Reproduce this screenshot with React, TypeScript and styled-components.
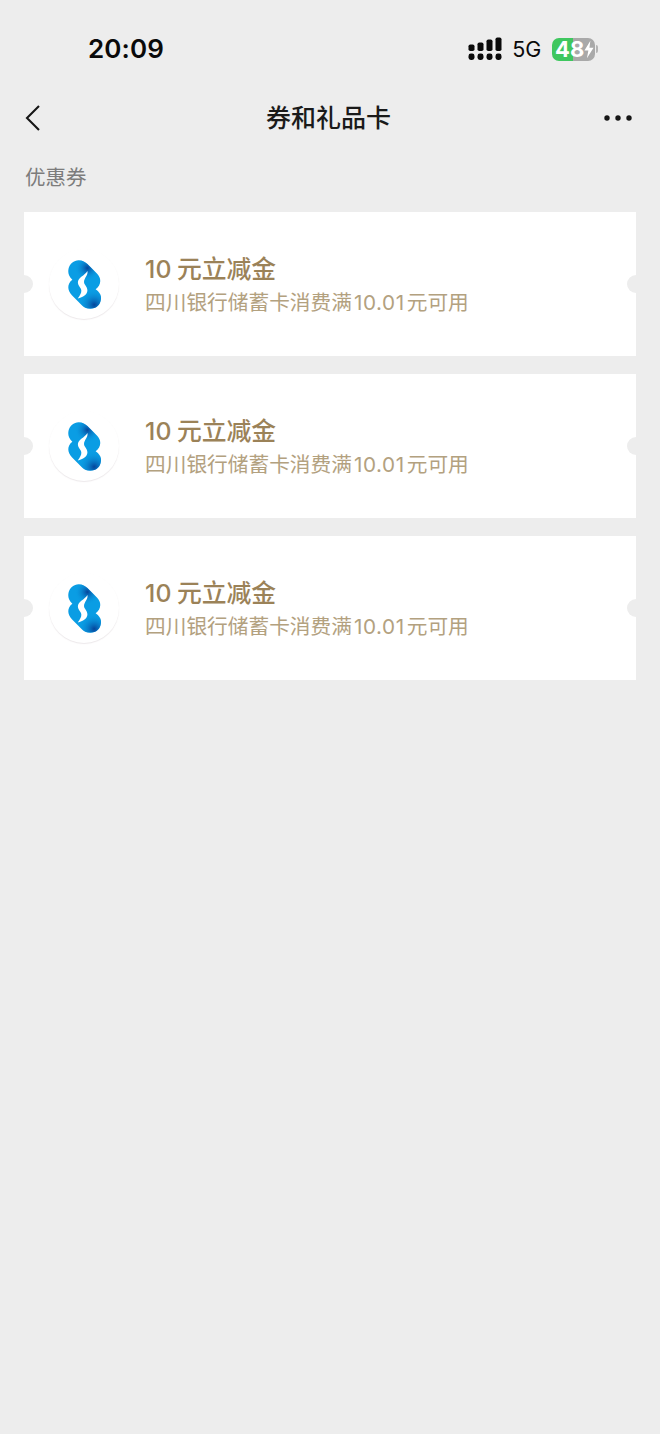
import React from "react";
import styled, { createGlobalStyle } from "styled-components";

const Global = createGlobalStyle`
  html, body { margin: 0; padding: 0; background: #ededed; }
  body { font-family: "Inter", "Noto Sans CJK SC", sans-serif; }
`;

const Page = styled.div`
  width: 660px;
  height: 1434px;
  background: #ededed;
  overflow: hidden;
  display: flex;
  flex-direction: column;
`;

const StatusBar = styled.div`
  height: 98px;
  padding: 0 62px 0 88px;
  box-sizing: border-box;
  display: flex;
  align-items: center;
  justify-content: space-between;
`;

const Time = styled.div`
  font-family: "Inter", sans-serif;
  font-size: 26px;
  font-weight: 600;
  letter-spacing: 0.1px;
  color: #0a0a0a;
  padding-bottom: 2px;
`;

const StatusRight = styled.div`
  display: flex;
  align-items: center;
`;

const Network = styled.span`
  font-family: "Inter", sans-serif;
  font-size: 21.5px;
  font-weight: 400;
  color: #0a0a0a;
  margin: 0 11px 0 10px;
  letter-spacing: -0.2px;
`;

const Battery = styled.div`
  width: 43px;
  height: 23px;
  border-radius: 7px;
  overflow: hidden;
  background: linear-gradient(to right, #3fc75f 0 21px, #a9a9a9 21px);
  display: flex;
  align-items: center;
  padding-left: 3px;
  box-sizing: border-box;
  font-family: "Inter", sans-serif;
  font-size: 22px;
  font-weight: 700;
  color: #fff;
`;

const BatteryNub = styled.div`
  width: 2px;
  height: 8px;
  margin-left: 1px;
  border-radius: 0 2px 2px 0;
  background: #b4b4b4;
`;

const Nav = styled.div`
  height: 40px;
  padding: 0 28px 0 25px;
  display: grid;
  grid-template-columns: 1fr auto 1fr;
  align-items: center;
`;

const NavEnd = styled.div`
  display: flex;
  justify-content: flex-end;
`;

const NavStart = styled.div`
  display: flex;
`;

const NavTitle = styled.div`
  font-size: 25px;
  font-weight: 500;
  color: #1a1a1a;
  padding-bottom: 4px;
`;

const SectionLabel = styled.div`
  margin: 26px 0 0 25px;
  height: 28px;
  line-height: 28px;
  font-size: 20.5px;
  color: #7c7c7c;
`;

const List = styled.div`
  margin: 20px 24px 0;
  display: flex;
  flex-direction: column;
  gap: 18px;
`;

const Card = styled.div`
  position: relative;
  height: 144px;
  background: #fff;
  overflow: hidden;
  display: flex;
  align-items: center;
  padding-left: 25px;
  gap: 26px;
`;

const Notch = styled.span<{ $side: "left" | "right" }>`
  position: absolute;
  top: 63px;
  ${(p) => p.$side}: -9px;
  width: 18px;
  height: 18px;
  border-radius: 50%;
  background: #ededed;
`;

const LogoCircle = styled.div`
  width: 70px;
  height: 70px;
  border-radius: 50%;
  background: #fff;
  box-shadow: 0 1px 1px rgba(150, 130, 140, 0.18);
  display: flex;
  align-items: center;
  justify-content: center;
  flex-shrink: 0;
`;

const CardText = styled.div`
  display: flex;
  flex-direction: column;
  gap: 4px;
  margin-top: 2px;
`;

const CardTitle = styled.div`
  font-size: 24.8px;
  line-height: 32px;
  font-weight: 500;
  color: #9b8258;
  white-space: nowrap;
`;

const TitleAmount = styled.span`
  margin-right: 5px;
  letter-spacing: 0.3px;
`;

const CardDesc = styled.div`
  font-size: 20.7px;
  line-height: 28px;
  color: #b3a17f;
  white-space: nowrap;
`;

const DescAmount = styled.span`
  margin: 0 2px;
  letter-spacing: 0.6px;
`;

const Signal = () => (
  <svg width="34" height="24" viewBox="0 0 34 24" fill="#0a0a0a">
    <rect x="0.5" y="7.5" width="6" height="6.5" rx="1.8" />
    <rect x="9.5" y="5.5" width="6" height="8.5" rx="1.8" />
    <rect x="18.5" y="2.5" width="6" height="11.5" rx="1.8" />
    <rect x="27.5" y="0.5" width="6" height="13.5" rx="1.8" />
    <rect x="0.5" y="16.5" width="6" height="6.5" rx="2.4" />
    <rect x="9.5" y="16.5" width="6" height="6.5" rx="2.4" />
    <rect x="18.5" y="16.5" width="6" height="6.5" rx="2.4" />
    <rect x="27.5" y="16.5" width="6" height="6.5" rx="2.4" />
  </svg>
);

const Bolt = () => (
  <svg width="10" height="19" viewBox="0 0 11 19" fill="#fff">
    <path d="M7 0 L0.5 10.5 H4.8 L3.2 19 L10.5 7.5 H6 Z" />
  </svg>
);

const BackIcon = () => (
  <svg width="16" height="26" viewBox="0 0 16 26" fill="none" stroke="#161616" strokeWidth="2.1">
    <path d="M14 1 L2 13 L14 25" />
  </svg>
);

const MoreIcon = () => (
  <svg width="28" height="6" viewBox="0 0 28 6" fill="#161616">
    <circle cx="3" cy="3" r="2.7" />
    <circle cx="14" cy="3" r="2.7" />
    <circle cx="25" cy="3" r="2.7" />
  </svg>
);

const SILHOUETTE =
  "M11 0 C15 0 18 2 20 4 L30 14 C35 19 34 26 28.5 30 C33 33 34.5 37 34 40 C33.5 46 29 50 23 50 C19 50 16 48 14 46 L4 36 C-1 31 -1 24 4.5 20 C0 16 0 12 0.5 9 C1.5 4 6 0 11 0 Z";

const BankLogo = ({ id }: { id: string }) => (
  <svg width="33" height="49" viewBox="0 0 34 50">
    <defs>
      <radialGradient id={`${id}a`} gradientUnits="userSpaceOnUse" cx="20" cy="8" r="13">
        <stop offset="0" stopColor="#053f96" stopOpacity="0.95" />
        <stop offset="1" stopColor="#0a9de4" stopOpacity="0" />
      </radialGradient>
      <radialGradient id={`${id}b`} gradientUnits="userSpaceOnUse" cx="27" cy="46" r="16">
        <stop offset="0" stopColor="#053f96" stopOpacity="0.95" />
        <stop offset="1" stopColor="#0a9de4" stopOpacity="0" />
      </radialGradient>
      <clipPath id={`${id}c`}>
        <path d={SILHOUETTE} />
      </clipPath>
    </defs>
    <path fill="#0a9de4" d={SILHOUETTE} />
    <g clipPath={`url(#${id}c)`}>
      <rect width="34" height="50" fill={`url(#${id}a)`} />
      <rect width="34" height="50" fill={`url(#${id}b)`} />
    </g>
    <path
      fill="#fff"
      d="M20 11 C21 15.5 16.5 18 16.5 22.5 C16.5 25.5 20 27 20 31 C20 35.5 15.5 38 10 39.5 C12.5 36 14 33.8 13.7 31 C13.4 28 10 26.5 10.2 22.5 C10.5 17.5 17 16 20 11 Z"
    />
  </svg>
);

const coupons = ["c1", "c2", "c3"];

export default function App() {
  return (
    <Page>
      <Global />
      <StatusBar>
        <Time>20:09</Time>
        <StatusRight>
          <Signal />
          <Network>5G</Network>
          <Battery>
            48
            <Bolt />
          </Battery>
          <BatteryNub />
        </StatusRight>
      </StatusBar>
      <Nav>
        <NavStart>
          <BackIcon />
        </NavStart>
        <NavTitle>券和礼品卡</NavTitle>
        <NavEnd>
          <MoreIcon />
        </NavEnd>
      </Nav>
      <SectionLabel>优惠券</SectionLabel>
      <List>
        {coupons.map((id) => (
          <Card key={id}>
            <Notch $side="left" />
            <Notch $side="right" />
            <LogoCircle>
              <BankLogo id={id} />
            </LogoCircle>
            <CardText>
              <CardTitle>
                <TitleAmount>10</TitleAmount>元立减金
              </CardTitle>
              <CardDesc>
                四川银行储蓄卡消费满<DescAmount>10.01</DescAmount>元可用
              </CardDesc>
            </CardText>
          </Card>
        ))}
      </List>
    </Page>
  );
}
